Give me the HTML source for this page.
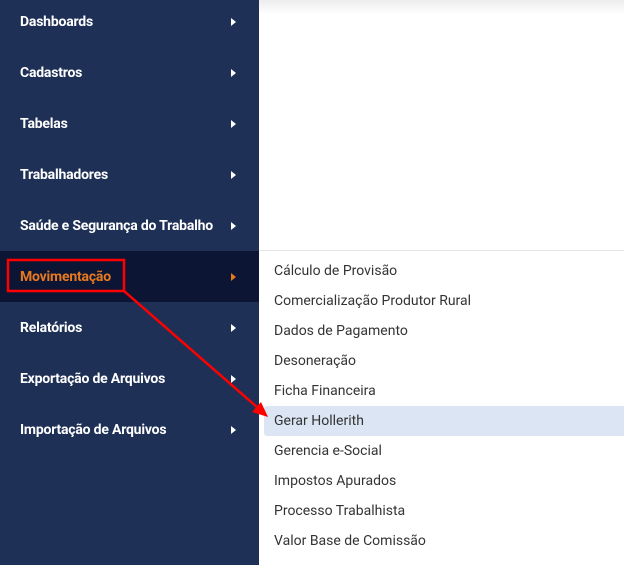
<!DOCTYPE html>
<html><head><meta charset="utf-8"><style>
body{margin:0;width:624px;height:565px;overflow:hidden;background:#fff;font-family:Roboto,"Liberation Sans",sans-serif;position:relative}
.side{position:absolute;left:0;top:0;width:259px;height:565px;background:#1f3057}
.it{position:absolute;left:0;width:259px;height:51px;color:#fff;font-weight:bold;font-size:14px;letter-spacing:-0.2px}
.it span{position:absolute;left:20px;top:50%;transform:translateY(-50%)}
.it i{position:absolute;left:231px;top:50%;margin-top:-4px;width:0;height:0;border-left:5px solid #fff;border-top:4px solid transparent;border-bottom:4px solid transparent}
.act{background:#0c1634;color:#e8791f}
.act i{border-left-color:#e8791f}
.sub{position:absolute;left:259px;top:250px;width:365px;height:315px;background:#fff;border-top:1px solid #e5e5e5}
.s{position:absolute;left:5px;width:360px;height:30px;font-size:14px;color:#333;line-height:30px;text-indent:10px}
.hl{background:#dbe5f4;border-radius:3px 0 0 3px}
.shadow{position:absolute;left:259px;top:0;width:365px;height:14px;background:linear-gradient(#ececec,#fff)}
</style></head><body>
<div class="shadow"></div>
<div class="side">
<div class="it" style="top:-4px"><span>Dashboards</span><i></i></div>
<div class="it" style="top:47px"><span>Cadastros</span><i></i></div>
<div class="it" style="top:98px"><span>Tabelas</span><i></i></div>
<div class="it" style="top:149px"><span>Trabalhadores</span><i></i></div>
<div class="it" style="top:200px"><span>Saúde e Segurança do Trabalho</span><i></i></div>
<div class="it act" style="top:251px"><span>Movimentação</span><i></i></div>
<div class="it" style="top:302px"><span>Relatórios</span><i></i></div>
<div class="it" style="top:353px"><span>Exportação de Arquivos</span><i></i></div>
<div class="it" style="top:404px"><span>Importação de Arquivos</span><i></i></div>
</div>
<div class="sub">
<div class="s" style="top:5px">Cálculo de Provisão</div>
<div class="s" style="top:35px">Comercialização Produtor Rural</div>
<div class="s" style="top:65px">Dados de Pagamento</div>
<div class="s" style="top:95px">Desoneração</div>
<div class="s" style="top:125px">Ficha Financeira</div>
<div class="s hl" style="top:155px">Gerar Hollerith</div>
<div class="s" style="top:185px">Gerencia e-Social</div>
<div class="s" style="top:215px">Impostos Apurados</div>
<div class="s" style="top:245px">Processo Trabalhista</div>
<div class="s" style="top:275px">Valor Base de Comissão</div>
</div>
<svg style="position:absolute;left:0;top:0" width="624" height="565">
<rect x="8" y="260" width="116" height="31" fill="none" stroke="#f00" stroke-width="2.5"/>
<line x1="124" y1="291" x2="258" y2="408" stroke="#f00" stroke-width="2.5"/>
<polygon points="268,417 252,412 261,402" fill="#f00"/>
</svg>
</body></html>
